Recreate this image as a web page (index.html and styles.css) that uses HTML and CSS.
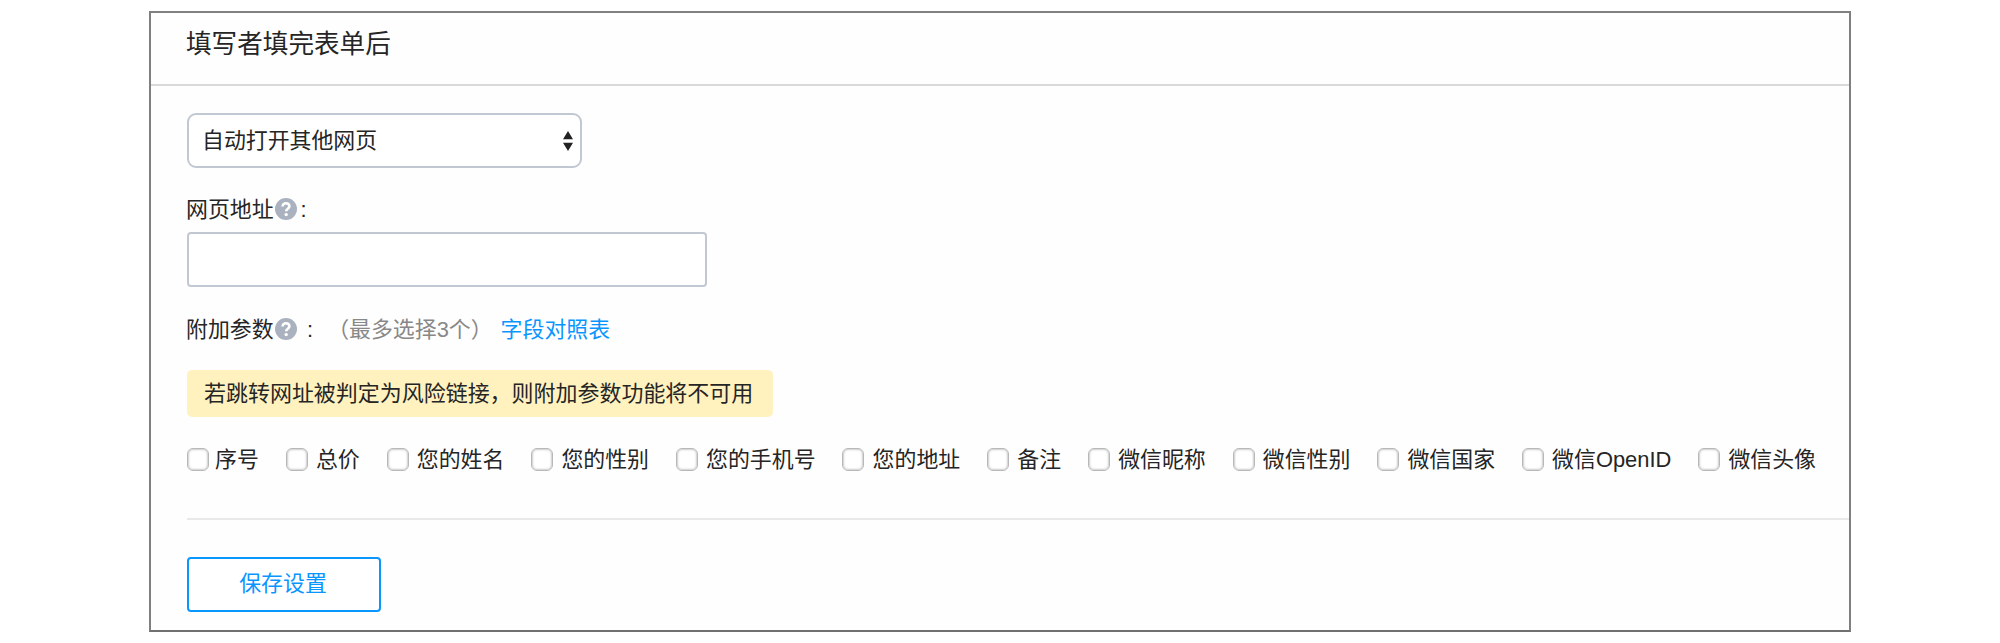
FILE: index.html
```html
<!DOCTYPE html>
<html lang="zh-CN">
<head>
<meta charset="utf-8">
<title>填写者填完表单后</title>
<link rel="stylesheet" href="styles.css">
</head>
<body>
<main class="panel">
  <header class="panel-head"><h1 class="title">填写者填完表单后</h1></header>
  <div class="panel-body">
    <div class="select">
      <span>自动打开其他网页</span>
      <svg class="arrows" width="10" height="20" viewBox="0 0 10 20"><path d="M5 0L10 8.3H0ZM0 11.7H10L5 20Z" fill="#222"/></svg>
    </div>
    <div class="label label-url">
      <span>网页地址</span>
      <svg class="help" width="22" height="22" viewBox="0 0 22 22"><circle cx="11" cy="11" r="11" fill="#abb2bf"/><path d="M7.6 8.6C7.6 6.4 9 5.3 11 5.3s3.4 1.1 3.4 3c0 2.4-3.2 2.4-3.2 5" fill="none" stroke="#fff" stroke-width="2.6"/><circle cx="11.2" cy="16.6" r="1.7" fill="#fff"/></svg>
      <span class="colon">:</span>
    </div>
    <input class="url" type="text">
    <div class="label label-params">
      <span>附加参数</span>
      <svg class="help" width="22" height="22" viewBox="0 0 22 22"><circle cx="11" cy="11" r="11" fill="#abb2bf"/><path d="M7.6 8.6C7.6 6.4 9 5.3 11 5.3s3.4 1.1 3.4 3c0 2.4-3.2 2.4-3.2 5" fill="none" stroke="#fff" stroke-width="2.6"/><circle cx="11.2" cy="16.6" r="1.7" fill="#fff"/></svg>
      <span class="colon colon-wide">:</span>
      <span class="limit">（最多选择3个）</span>
      <a class="link">字段对照表</a>
    </div>
    <div class="warning">若跳转网址被判定为风险链接，则附加参数功能将不可用</div>
    <div class="options">
      <label class="option"><input class="box" type="checkbox">序号</label>
      <label class="option"><input class="box" type="checkbox">总价</label>
      <label class="option"><input class="box" type="checkbox">您的姓名</label>
      <label class="option"><input class="box" type="checkbox">您的性别</label>
      <label class="option"><input class="box" type="checkbox">您的手机号</label>
      <label class="option"><input class="box" type="checkbox">您的地址</label>
      <label class="option"><input class="box" type="checkbox">备注</label>
      <label class="option"><input class="box" type="checkbox">微信昵称</label>
      <label class="option"><input class="box" type="checkbox">微信性别</label>
      <label class="option"><input class="box" type="checkbox">微信国家</label>
      <label class="option"><input class="box" type="checkbox">微信OpenID</label>
      <label class="option"><input class="box" type="checkbox">微信头像</label>
    </div>
    <div class="footer"><button class="save">保存设置</button></div>
  </div>
</main>
</body>
</html>
```
FILE: styles.css
```css
* { box-sizing: border-box; }
body {
  margin: 0;
  padding: 11px 149px 0;
  background: #fff;
  color: #252525;
  font: 400 21.9px/32px "Liberation Sans", "Noto Sans CJK SC", sans-serif;
}
.panel {
  width: 1702px;
  height: 621px;
  border: 2px solid #808080;
  border-bottom-color: #707070;
  background: #fefefe;
}
.panel-head {
  height: 73px;
  padding: 15px 0 0 35px;
  border-bottom: 2px solid #d9d9d9;
}
.title { margin: 0; font-size: 25.6px; font-weight: 400; line-height: 32px; }
.panel-body { padding: 27px 0 0 36px; }
.select {
  display: flex;
  align-items: center;
  justify-content: space-between;
  width: 395px;
  height: 55px;
  padding: 0 7px 0 13px;
  border: 2px solid #c2c8d1;
  border-radius: 9px;
  background: #fff;
}
.label { display: flex; align-items: center; height: 32px; margin-left: -1px; white-space: nowrap; }
.label-url { margin-top: 26px; margin-bottom: 6px; }
.label-params { margin-top: 27px; }
.help { margin: 0 0 2px 1px; }
.colon { margin-left: 4px; }
.colon-wide { margin-left: 10.5px; }
.limit { margin-left: 14px; color: #888; }
.link { margin-left: 8px; color: #0a96ff; }
.url {
  display: block;
  width: 520px;
  height: 55px;
  margin: 0;
  border: 2px solid #c2c8d1;
  border-radius: 4px;
  background: #fff;
}
.warning {
  width: 586px;
  height: 47px;
  margin-top: 24px;
  padding-left: 17px;
  border-radius: 5px;
  background: #fff2bf;
  font-size: 21.97px;
  line-height: 48px;
  white-space: nowrap;
}
.options { display: flex; gap: 26.9px; height: 32px; margin-top: 27px; white-space: nowrap; }
.option { display: flex; align-items: center; }
.box {
  appearance: none;
  width: 22px;
  height: 23px;
  margin: 0 8.2px 2px 0;
  border: 1px solid #b8b8b8;
  border-radius: 6px;
  background: #fff;
  box-shadow: inset 0 0 2px 1px #ccc;
}
.option:first-child .box { margin-right: 6px; }
.footer { margin-top: 42px; padding-top: 37px; border-top: 2px solid #e9e9e9; }
.save {
  display: block;
  width: 194px;
  height: 55px;
  padding: 0 2px 1px 0;
  border: 2px solid #0a96ff;
  border-radius: 4px;
  background: #fff;
  color: #0a96ff;
  font: inherit;
}
```
